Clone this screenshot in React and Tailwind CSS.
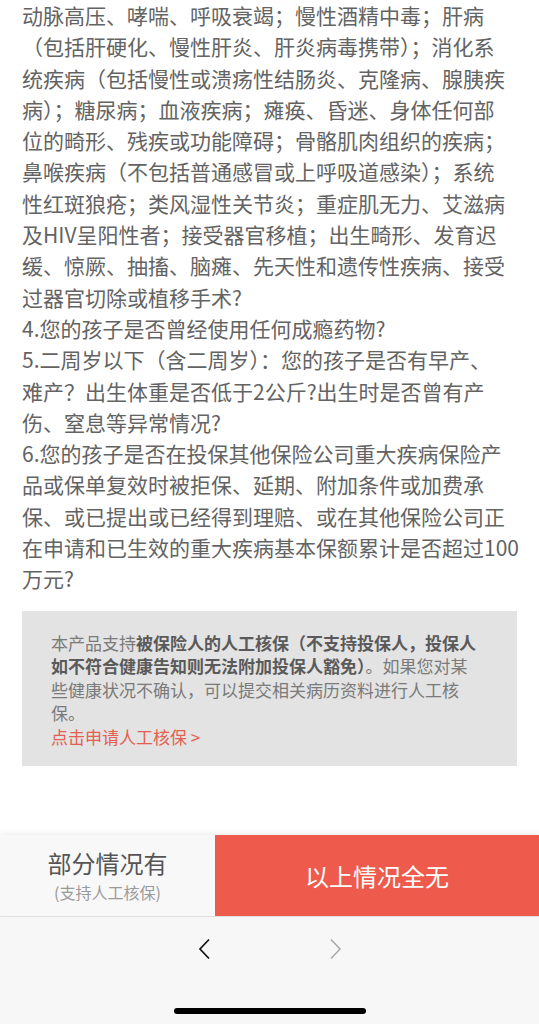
import React from "react";

const lines = [
  "动脉高压、哮喘、呼吸衰竭；慢性酒精中毒；肝病",
  "（包括肝硬化、慢性肝炎、肝炎病毒携带）；消化系",
  "统疾病（包括慢性或溃疡性结肠炎、克隆病、腺胰疾",
  "病）；糖尿病；血液疾病；瘫痪、昏迷、身体任何部",
  "位的畸形、残疾或功能障碍；骨骼肌肉组织的疾病；",
  "鼻喉疾病（不包括普通感冒或上呼吸道感染）；系统",
  "性红斑狼疮；类风湿性关节炎；重症肌无力、艾滋病",
  "及HIV呈阳性者；接受器官移植；出生畸形、发育迟",
  "缓、惊厥、抽搐、脑瘫、先天性和遗传性疾病、接受",
  "过器官切除或植移手术?",
  "4.您的孩子是否曾经使用任何成瘾药物?",
  "5.二周岁以下（含二周岁）：您的孩子是否有早产、",
  "难产？出生体重是否低于2公斤?出生时是否曾有产",
  "伤、窒息等异常情况?",
  "6.您的孩子是否在投保其他保险公司重大疾病保险产",
  "品或保单复效时被拒保、延期、附加条件或加费承",
  "保、或已提出或已经得到理赔、或在其他保险公司正",
  "在申请和已生效的重大疾病基本保额累计是否超过100",
  "万元?",
];

export default function App() {
  return (
    <div
      className="h-[1024px] w-full flex flex-col overflow-hidden bg-white"
      style={{ fontFamily: '"Noto Sans CJK SC", "Noto Sans", sans-serif' }}
    >
      <div className="px-[22px] text-[21px] leading-[31.3px] text-[#636363]">
        {lines.map((l, i) => (
          <div key={i} className="whitespace-nowrap">
            {l}
          </div>
        ))}
      </div>

      <div className="mx-[22px] mt-[16px] bg-[#e3e3e3] pl-[29px] pr-[20px] pt-[20px] pb-[18px] text-[17px] leading-[23.5px] text-[#7a7a7a]">
        <div className="whitespace-nowrap">
          本产品支持
          <span className="font-semibold text-[#5a5a5a]">被保险人的人工核保（不支持投保人，投保人</span>
        </div>
        <div className="whitespace-nowrap">
          <span className="font-semibold text-[#5a5a5a]">如不符合健康告知则无法附加投保人豁免）</span>
          。如果您对某
        </div>
        <div className="whitespace-nowrap">些健康状况不确认，可以提交相关病历资料进行人工核</div>
        <div className="whitespace-nowrap">保。</div>
        <div className="whitespace-nowrap text-[#e2604f]">点击申请人工核保 &gt;</div>
      </div>

      <div className="flex-1" />

      <div className="h-[81px] flex shadow-[0_-2px_6px_rgba(0,0,0,0.07)] relative">
        <div className="w-[215px] bg-[#f8f8f8] flex flex-col items-center pt-[12px]">
          <div className="text-[24px] leading-[32px] text-[#555555]">部分情况有</div>
          <div className="mt-[3px] text-[16px] leading-[21px] text-[#9a9a9a]">(支持人工核保)</div>
        </div>
        <div className="flex-1 bg-[#ee5b4d] flex items-center justify-center">
          <span className="text-[24px] text-white">以上情况全无</span>
        </div>
      </div>

      <div className="h-[108px] bg-[#f7f7f7] border-t border-[#e2e2e2] flex flex-col items-center">
        <div className="flex items-center mt-[21px] h-[22px]">
          <svg width="13" height="22" viewBox="0 0 13 22">
            <polyline points="11,1.5 2,11 11,20.5" fill="none" stroke="#111" strokeWidth="1.7" />
          </svg>
          <svg width="13" height="22" viewBox="0 0 13 22" className="ml-[118px]">
            <polyline points="2,1.5 11,11 2,20.5" fill="none" stroke="#a8a8a8" strokeWidth="1.5" />
          </svg>
        </div>
        <div className="mt-[48px] w-[192px] h-[6px] rounded-full bg-black" />
      </div>
    </div>
  );
}
